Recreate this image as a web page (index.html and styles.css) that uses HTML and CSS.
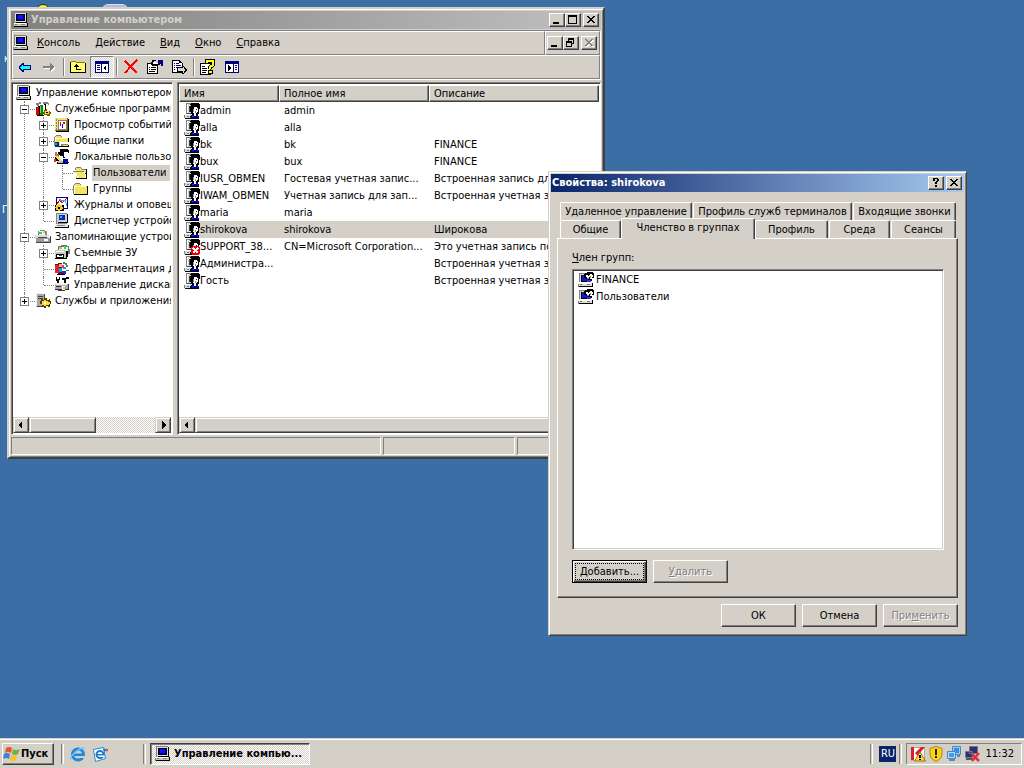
FILE: index.html
```html
<!DOCTYPE html>
<html lang="ru">
<head>
  <meta charset="UTF-8">
  <meta name="viewport" content="width=device-width, initial-scale=1.0">
  <title>Управление компьютером</title>
  <link rel="stylesheet" href="styles.css">
</head>
<body>
  <svg class="sprite" aria-hidden="true">
    <symbol id="pc" viewBox="0 0 16 16">
      <path fill="#808080" d="M1 0h12v1H2v10H1z"/>
      <path fill="#e4e0d8" d="M2 1h11v9H2z"/>
      <path fill="#000" d="M3 2h9v7H3zM13 1h1v10H3v-1h10z"/>
      <path fill="#0000a8" d="M4 3h7v5H4z"/>
      <path fill="#1010ff" d="M5 3h5v4H5z"/>
      <path fill="#c8c4bc" d="M1 11h13v3H1z"/>
      <path fill="#fff" d="M1 11h12v1H1z"/>
      <path fill="#808080" d="M0 12h1v3H0zM8 12h4v1H8z"/>
      <path fill="#000" d="M14 11h1v4h-1zM1 14h14v1H1z"/>
      <path fill="#0c0" d="M2 12h2v1H2z"/>
    </symbol>
    <symbol id="user" viewBox="0 0 16 16">
      <path fill="#808080" d="M2 0h6v1H3v10H2z"/>
      <path fill="#d8d8d8" d="M3 1h4v10H3z"/>
      <path fill="#fff" d="M3 1h1v9H3z"/>
      <path fill="#404040" d="M5 3h2v6H5zM3 10h5v1H3z"/>
      <path fill="#d8d8d8" d="M1 11h6v4H1z"/>
      <path fill="#808080" d="M0 12h1v3H0z"/>
      <path fill="#fff" d="M1 11h5v1H1z"/>
      <path fill="#0c0" d="M3 13h2v1H3z"/>
      <path fill="#000" d="M7 0h8v1h1v5h-1v5h-1v1H8v-1H7V9H6V3h1V2H6V1h1zM1 15h14v1H1z"/>
      <path fill="#fff" d="M10 4h3v1h1v4h-1v1h-1v2h-2v-2H9V8h1z"/>
      <path fill="#909090" d="M9 6h1v3H9zM11 8h1v2h-1z"/>
      <path fill="#0000c0" d="M12 6h1v1h-1z"/>
      <path fill="#000080" d="M7 12h3v1h2v-1h2v1h1v2H6v-2h1z"/>
      <path fill="#22f" d="M8 13h2v1H8zM13 13h1v1h-1z"/>
    </symbol>
    <symbol id="user-off" viewBox="0 0 16 16">
      <use href="#user"/>
      <path fill="#e00" d="M8 7h7v1h1v7h-1v1H8v-1H7V8h1z"/>
      <path stroke="#fff" stroke-width="2" d="M9 9l5 5M14 9l-5 5"/>
    </symbol>
    <symbol id="group" viewBox="0 0 16 16">
      <path fill="#808080" d="M1 1h7v1H2v8H1z"/>
      <path fill="#d8d8d8" d="M2 2h7v8H2z"/>
      <path fill="#000" d="M3 3h10v7H3z"/>
      <path fill="#1515d0" d="M4 3h6v6H4z"/>
      <path fill="#000" d="M7 1h2V0h6v1h1v5h-2v3h-4V7H8V6H6V2h1z"/>
      <path fill="#fff" d="M8 3h2v1h1v2H9V5H8zM12 2h2v1h1v2h-1v2h-2V5h-1V3h1z"/>
      <path fill="#808080" d="M9 6h2v1H9zM12 4h1v2h-1z"/>
      <path fill="#2a2aff" d="M9 8h4v2H9z"/>
      <path fill="#dcdcdc" d="M1 11h13v3H1z"/>
      <path fill="#fff" d="M1 11h12v1H1z"/>
      <path fill="#0a0" d="M2 12h2v1H2z"/>
      <path fill="#808080" d="M9 12h3v1H9zM0 12h1v3H0z"/>
      <path fill="#000" d="M14 11h1v4h-1zM1 14h14v1H1z"/>
    </symbol>
    <symbol id="folder" viewBox="0 0 16 16">
      <path fill="#808080" d="M1 3h1V2h5v1h1v1h6v1H1zM0 4h1v9H0z"/>
      <path fill="#fff" d="M1 4h13v9H1z"/>
      <path fill="#f2e45c" d="M2 3h5v1h1v1h6v8H2z"/>
      <path fill="#fff7b0" d="M2 5h11v1H2z"/>
      <path fill="#000" d="M14 5h1v9H1v-1h13z"/>
    </symbol>
    <symbol id="folder-open" viewBox="0 0 16 16">
      <path fill="#808080" d="M2 3h1V2h5v1h1v1h4v1H2z"/>
      <path fill="#f2e45c" d="M3 3h5v1h1v1h4v8H3z"/>
      <path fill="#000" d="M13 4h1v9h-1zM3 13h11v1H3zM12 8h1v2h-1z"/>
      <path fill="#fff" d="M0 6h11v1h1v2h1v4H4v-2H3V9H2V8H1V7H0z"/>
      <path fill="#f4e66c" d="M2 7h9v2h1v4H5v-2H4V9H3V8H2z"/>
      <path fill="#808080" d="M0 6h11v1H0z"/>
    </symbol>
    <symbol id="tools" viewBox="0 0 16 16">
      <path fill="#808080" d="M1 2h3V1h2v2H4v2H2V4H1zM8 1h5v1h1v2h-1V3H8z"/>
      <path fill="#000" d="M3 5h2v9H3zM9 3h2v9H9z"/>
      <path fill="#d00" d="M1 6h3v8H1z"/>
      <path fill="#080" d="M5 4h3v10H5z"/>
      <path fill="#6d6" d="M5 5h1v7H5z"/>
      <path fill="#fff" d="M9 4h1v5H9z"/>
      <path fill="#806000" d="M9 9h2V8h1v2h3v1h1v2h-1v2h-3v-1H9v-1H8v-2h1z"/>
      <path fill="#fd3" d="M10 10h4v3h-4z"/>
      <path fill="#000" d="M11 11h2v1h-2zM2 14h7v1H2z"/>
    </symbol>
    <symbol id="events" viewBox="0 0 16 16">
      <path fill="#806000" d="M1 1h13v13H1z"/>
      <path fill="#f2e070" d="M1 1h12v12H1z"/>
      <path fill="#000" d="M14 2h1v13H2v-1h12z"/>
      <path fill="#808080" d="M4 3h9v10H4z"/>
      <path fill="#fff" d="M5 4h7v8H5z"/>
      <path fill="#808080" d="M2 2h1v2H2zM2 5h1v2H2zM2 8h1v2H2zM2 11h1v2H2z"/>
      <path fill="#e00" d="M6 5h1v4H6zM9 5h2v2H9z"/>
      <path fill="#00c" d="M8 7h1v4H8z"/>
    </symbol>
    <symbol id="shared" viewBox="0 0 16 16">
      <use href="#folder"/>
      <path fill="#fff" d="M6 9h9v3H9v1H6z"/>
      <path fill="#808080" d="M7 11h7v1H9v1H7z"/>
      <path fill="#003080" d="M1 9h4v5H1z"/>
      <path fill="#29f" d="M1 10h2v2H1z"/>
      <path fill="#000" d="M5 13h9v1H5z"/>
    </symbol>
    <symbol id="users" viewBox="0 0 16 16">
      <path fill="#000" d="M6 0h8v1h1v3h-3v5H9V7H6V6H4V3h2z"/>
      <path fill="#fff" d="M10 3h4v2h1v3h-1v2h-3V8h-1z"/>
      <path fill="#c66" d="M1 3h2v2h2v3H3V7H1z"/>
      <path fill="#000" d="M1 8h4v4H1zM3 13h11v2H3z"/>
      <path fill="#ee3" d="M2 7h2v1h1v1h1v1h1v1h1v2H6v-1H5v-1H4v-1H3V9H2z"/>
      <path fill="#00a" d="M9 10h5v3h1v1H9z"/>
      <path fill="#e22" d="M0 10h2v3H0z"/>
      <path fill="#bbb" d="M4 12h5v2H4z"/>
    </symbol>
    <symbol id="perf" viewBox="0 0 16 16">
      <path fill="#00008b" d="M2 0h12v12H2z"/>
      <path fill="#fff" d="M3 1h10v10H3z"/>
      <path fill="none" stroke="#e00" d="M3 7l3-4 2 3 5-5"/>
      <path fill="none" stroke="#39f" d="M5 2l3 2 3-1 2 6"/>
      <path fill="#000" d="M1 8h9v6H1z"/>
      <path fill="#ec2" d="M2 8h2V7h2v1h2v2h1v2H8v1H6v1H4v-1H2v-2H1v-1h1z"/>
      <path fill="#000" d="M4 10h2v2H4z"/>
    </symbol>
    <symbol id="device" viewBox="0 0 16 16">
      <path fill="#808080" d="M2 0h11v1H3v9H2z"/>
      <path fill="#d0d0d0" d="M3 1h10v8H3z"/>
      <path fill="#000" d="M13 1h1v9H4V9h9zM1 14h14v1H1zM14 12h1v2h-1z"/>
      <path fill="#0030c0" d="M5 2h6v5H5z"/>
      <path fill="#3bf" d="M6 3h2v2H6z"/>
      <path fill="#e4e4e4" d="M2 11h11v1h1v2H1v-2h1z"/>
      <path fill="#888" d="M3 12h8v1H3zM2 10h11v1H2z"/>
    </symbol>
    <symbol id="storage" viewBox="0 0 16 16">
      <path fill="#888" d="M3 2h2V1h5v1h2v5H3z"/>
      <path fill="#dff" d="M4 2h6v4H4z"/>
      <path fill="#3d3" d="M4 3h3v2H4z"/>
      <path fill="#fb4" d="M8 2h2v2H8z"/>
      <path fill="#ddd" d="M0 6h14v3H0z"/>
      <path fill="#999" d="M1 9h14v4H1z"/>
      <path fill="#444" d="M3 8h9v1H3zM1 13h14v1H1zM15 7h1v7h-1z"/>
      <path fill="#fff" d="M9 10h4v2H9z"/>
    </symbol>
    <symbol id="removable" viewBox="0 0 16 16">
      <path fill="#777" d="M4 1h3V0h6v1h2v3h1v5h-4V6H4z"/>
      <path fill="#dff" d="M5 2h9v4H5z"/>
      <path fill="#3d3" d="M10 1h2v3h-2z"/>
      <path fill="#fa3" d="M5 2h3v2H5z"/>
      <path fill="#c8c8c8" d="M1 5h11v8H1z"/>
      <path fill="#000" d="M2 9h8v4H2zM12 6h2v6h-1v2H1v-1h11z"/>
      <path fill="#fff" d="M3 10h6v2H3zM2 6h8v1H2z"/>
      <path fill="#444" d="M5 10h3v1H5z"/>
    </symbol>
    <symbol id="defrag" viewBox="0 0 16 16">
      <path fill="#800020" d="M1 3h3V2h4v10h3v1H4v-1H1z"/>
      <path fill="#e1203a" d="M1 4h4v8H1z"/>
      <path fill="#fb3" d="M5 3h3v3H5z"/>
      <path fill="#0ad" d="M5 7h3v4H5zM9 6h3v2H9z"/>
      <path fill="#1a1" d="M9 1h2v1h2v2h-2V3H9zM12 9h3v1h-3z"/>
      <path fill="#c3c" d="M8 4h2v3H8zM12 4h2v2h-2z"/>
      <path fill="#22c" d="M8 10h4v3H8z"/>
      <path fill="#000" d="M3 13h8v1H3z"/>
    </symbol>
    <symbol id="disk" viewBox="0 0 16 16">
      <path fill="#000" d="M2 0h1v2h2V0h1v3H5v4H3V4H2zM8 1h4V0h3v2h-3v5h-2V3H8z"/>
      <path fill="#aaa" d="M1 7h13v5H1z"/>
      <path fill="#eee" d="M2 6h11v2H2z"/>
      <path fill="#333" d="M2 9h5v1H2zM14 7h1v6h-1zM1 12h13v1H1zM4 13h7v1H4z"/>
      <path fill="#fff" d="M8 9h3v4H8z"/>
      <path fill="#cc2" d="M9 10h2v2H9z"/>
    </symbol>
    <symbol id="services" viewBox="0 0 16 16">
      <path fill="#aaa" d="M1 1h8v13H1z"/>
      <path fill="#eee" d="M1 0h7v1H2v12H1z"/>
      <path fill="#444" d="M3 3h5v1H3zM3 5h5v1H3zM9 1h1v13H2v-1h7z"/>
      <path fill="#504000" d="M6 6h2v1h1V5h3v2h2V6h1v2h1v3h-1v3h-2v-1h-2v2H9v-2H7v-2H5V8h1z"/>
      <path fill="#fd3" d="M7 8h2V7h2v1h2v1h2v2h-1v1h-3v1H9v-1H7z"/>
      <path fill="#fff" d="M9 9h2v2H9z"/>
    </symbol>
    <symbol id="back" viewBox="0 0 16 16">
      <path fill="#000080" d="M2 7h1V6h1V5h1V4h2v2h7v5H7v2H5v-1H4v-1H3v-1H2z"/>
      <path fill="#0ff" d="M3 8h1V7h1V6h1v1h7v3H6v1H5v-1H4V9H3z"/>
    </symbol>
    <symbol id="forward" viewBox="0 0 16 16">
      <path fill="#fff" d="M3 8h7V5l5 4-5 4v-3H3z"/>
      <path fill="#808080" d="M2 7h7V4l5 4-5 4V9H2z"/>
    </symbol>
    <symbol id="up" viewBox="0 0 16 16">
      <path fill="#ffff70" d="M1 2h5v2h9v9H1z"/>
      <path fill="#000" d="M0 3h1v10h14V4h1v10H0zM6 5h1v1h1v1h1v1H7v2h4v1H6V8H4V7h1V6h1z"/>
      <path fill="#808000" d="M1 2h5v1H1zM6 3h9v1H6z"/>
    </symbol>
    <symbol id="tree-pane" viewBox="0 0 16 16">
      <path fill="#000080" d="M1 2h14v12H1z"/>
      <path fill="#fff" d="M2 5h5v8H2zM8 5h6v8H8z"/>
      <path fill="#000080" d="M3 6h3v1H3zM3 8h3v1H3zM3 10h3v1H3z"/>
      <path fill="#000" d="M12 6v6L9 9z"/>
    </symbol>
    <symbol id="action-pane" viewBox="0 0 16 16">
      <path fill="#000080" d="M1 2h14v12H1z"/>
      <path fill="#fff" d="M2 5h7v8H2zM10 5h4v8h-4z"/>
      <path fill="#000080" d="M11 6h2v1h-2zM11 8h2v1h-2zM11 10h2v1h-2z"/>
      <path fill="#000" d="M4 6v6l3-3z"/>
    </symbol>
    <symbol id="delete" viewBox="0 0 16 16">
      <path fill="none" stroke="#f00" stroke-width="2" d="M2 2l12 12M14 1L8 7l-6 7"/>
    </symbol>
    <symbol id="props" viewBox="0 0 16 16">
      <path fill="#000" d="M0 4h11v11H0z"/>
      <path fill="#fff" d="M1 5h9v9H1z"/>
      <path fill="#000" d="M2 8h1v1H2zM4 8h5v1H4zM2 10h1v1H2zM4 10h5v1H4zM2 12h6v1H2zM5 1h4v1H7v2h4V3h2v3h-3v1H5V6H4V3h1z"/>
      <path fill="#fff" d="M6 3h3v1h2v1H6z"/>
      <path fill="#000080" d="M11 1h5v6h-2V5h-3z"/>
    </symbol>
    <symbol id="export" viewBox="0 0 16 16">
      <path fill="#000" d="M1 1h8v1h1v1h1v1h1v10H1z"/>
      <path fill="#fff" d="M2 2h6v2h3v9H2z"/>
      <path fill="#000080" d="M3 4h1v1H3zM5 4h3v1H5zM3 6h1v1H3zM5 6h5v1H5zM3 8h1v1H3zM5 8h2v1H5zM3 10h1v1H3z"/>
      <path fill="#000" d="M6 8h5V7h2v1h1v1h1v1h1v2h-1v1h-1v1h-1v1h-2v-2H6z"/>
      <path fill="#d8d8d8" d="M7 9h5V8h1v2h1v2h-1v2h-1v-2H7z"/>
    </symbol>
    <symbol id="help" viewBox="0 0 16 16">
      <path fill="#000" d="M0 4h11v12H0z"/>
      <path fill="#fff" d="M1 5h9v10H1z"/>
      <path fill="#000" d="M2 7h3v1H2zM2 9h5v1H2zM2 11h5v1H2zM2 13h4v1H2z"/>
      <path fill="none" stroke="#000" stroke-width="4" d="M7 5V2h6v4l-3 2v2"/>
      <path fill="none" stroke="#ff0" stroke-width="2" d="M7 4V2h6v4l-3 2v2"/>
      <path fill="#000" d="M8 11h5v4H8z"/>
      <path fill="#ff0" d="M9 12h3v2H9z"/>
    </symbol>
    <symbol id="flag" viewBox="0 0 18 16">
      <path fill="#e8532b" d="M3 2q3-2 6 0L8 7Q5 5 2 7z"/>
      <path fill="#6cb33f" d="M10 3q3 2 7 0l-2 5q-3 2-6 0z"/>
      <path fill="#3f7de0" d="M1 8q3-2 6 0l-1 5q-3-2-6 0z"/>
      <path fill="#f8c21c" d="M8 9q3 2 6 0l-1 5q-3 2-6 0z"/>
    </symbol>
    <symbol id="ie" viewBox="0 0 16 16">
      <circle cx="8" cy="8.500" r="5.500" fill="none" stroke="#1c8adb" stroke-width="3"/>
      <path fill="#1c8adb" d="M4 7.500h10v2.500H4z"/>
      <path fill="#d4d0c8" d="M9 10h7v2H9z"/>
      <path fill="none" stroke="#7cc4f4" stroke-width="1.500" d="M1 14C-1 11 9 1 15 2"/>
    </symbol>
    <symbol id="outlook" viewBox="0 0 16 16">
      <path fill="#fff" stroke="#2a86d4" d="M1.500 3.500l10-2 2 11-10 3z"/>
      <circle cx="8" cy="8.500" r="3.500" fill="none" stroke="#1c7acb" stroke-width="2"/>
      <path fill="#1c7acb" d="M5 8h6v1.500H5z"/>
      <path fill="#fff" d="M9 9.500h3V11H9z"/>
      <path fill="#2a76c4" d="M11 4l2-2v1h3v2h-3v1z"/>
      <path fill="#e8662a" d="M14 2l2 2-2 2z"/>
    </symbol>
    <symbol id="kav" viewBox="0 0 16 16">
      <path fill="#fff" stroke="#aaa" d="M1.500 1.500h13v13h-13z"/>
      <path fill="#d8202a" d="M1 1h3v13H1zM5 7l6-6h4L9 8l6 6h-4z"/>
      <path fill="#ffd84a" stroke="#a07000" d="M10 6l5.500 9h-11z"/>
      <path fill="#000" d="M9 9h2v3H9zM9 13h2v1H9z"/>
    </symbol>
    <symbol id="shield" viewBox="0 0 16 16">
      <path fill="#fcd116" stroke="#a88410" d="M8 .5l6 2V8q0 5-6 7.500Q2 13 2 8V2.500z"/>
      <path fill="#222" d="M7 3h2v6H7zM7 10h2v2H7z"/>
    </symbol>
    <symbol id="net" viewBox="0 0 16 16">
      <path fill="#9cc8f0" stroke="#4a88c8" d="M6.500 .5h8v8h-8z"/>
      <path fill="#2f8ee8" d="M8 2h5v5H8z"/>
      <path fill="#b4d8f8" stroke="#4a88c8" d="M1.500 5.500h8v7h-8z"/>
      <path fill="#3aa0f4" d="M3 7h5v4H3z"/>
      <path fill="#7088a0" d="M3 13h6v2H3zM11 9h3v2h-3z"/>
    </symbol>
    <symbol id="net-off" viewBox="0 0 16 16">
      <path fill="#26336e" stroke="#778" d="M5.500 .5h8v7h-8zM1.500 5.500h7v6h-7z"/>
      <path fill="#556" d="M2 12h7v2H2z"/>
      <path stroke="#e0303a" stroke-width="2.500" d="M8 8l7 7M15 7l-7 8"/>
    </symbol>
    <symbol id="min" viewBox="0 0 12 10"><path d="M2 7h6v2H2z"/></symbol>
    <symbol id="max" viewBox="0 0 12 10"><path d="M1 0h9v9H1zM2 2v6h7V2z" fill-rule="evenodd"/></symbol>
    <symbol id="restore" viewBox="0 0 12 10"><path d="M3 0h6v6H7V5h1V2H4v1H3zM1 3h6v6H1zM2 5v3h4V5z" fill-rule="evenodd"/></symbol>
    <symbol id="close" viewBox="0 0 12 10"><path d="M2 1h2v1h1v1h2V2h1V1h2v1H9v1H8v1H7v1h1v1h1v1h1v1H8V7H7V6H5v1H4v1H2V7h1V6h1V5h1V4H4V3H3V2H2z"/></symbol>
    <symbol id="ask" viewBox="0 0 12 10"><path d="M3 0h5v1h1v2H8v1H7v2H5V4h1V3h1V1H5v2H3V1H2zM5 7h2v2H5z"/></symbol>
    <symbol id="left" viewBox="0 0 12 10"><path d="M3 5l4-4v8z"/></symbol>
    <symbol id="right" viewBox="0 0 12 10"><path d="M9 5L5 1v8z"/></symbol>
  </svg>

  <main class="desktop">
    <div class="shortcut shortcut-top"></div>
    <div class="shortcut shortcut-bin"></div>
    <span class="shortcut-label first">к</span>
    <span class="shortcut-label second">П</span>

    <section class="window mmc">
      <header class="titlebar inactive">
        <svg class="icon"><use href="#pc"/></svg>
        <h1>Управление компьютером</h1>
        <button class="caption" aria-label="Свернуть"><svg><use href="#min"/></svg></button>
        <button class="caption" aria-label="Развернуть"><svg><use href="#max"/></svg></button>
        <button class="caption close" aria-label="Закрыть"><svg><use href="#close"/></svg></button>
      </header>

      <div class="bars">
        <div class="menu-row">
          <nav class="menu">
            <svg class="icon"><use href="#pc"/></svg>
            <button><u>К</u>онсоль</button>
            <button><u>Д</u>ействие</button>
            <button><u>В</u>ид</button>
            <button><u>О</u>кно</button>
            <button><u>С</u>правка</button>
          </nav>
          <div class="child-buttons">
            <button class="caption" aria-label="Свернуть"><svg><use href="#min"/></svg></button>
            <button class="caption" aria-label="Восстановить"><svg><use href="#restore"/></svg></button>
            <button class="caption close" aria-label="Закрыть" disabled><svg><use href="#close"/></svg></button>
          </div>
        </div>
        <div class="toolbar">
          <button aria-label="Назад"><svg class="icon"><use href="#back"/></svg></button>
          <button aria-label="Вперед"><svg class="icon"><use href="#forward"/></svg></button>
          <span class="sep"></span>
          <button aria-label="Вверх"><svg class="icon"><use href="#up"/></svg></button>
          <button class="pressed" aria-label="Дерево консоли"><svg class="icon"><use href="#tree-pane"/></svg></button>
          <span class="sep"></span>
          <button aria-label="Удалить"><svg class="icon"><use href="#delete"/></svg></button>
          <button aria-label="Свойства"><svg class="icon"><use href="#props"/></svg></button>
          <button aria-label="Экспорт"><svg class="icon"><use href="#export"/></svg></button>
          <span class="sep"></span>
          <button aria-label="Справка"><svg class="icon"><use href="#help"/></svg></button>
          <button aria-label="Панель действий"><svg class="icon"><use href="#action-pane"/></svg></button>
        </div>
      </div>

      <div class="panes">
        <div class="pane tree-pane">
          <div class="tree">
            <div class="node"><svg class="icon"><use href="#pc"/></svg><span>Управление компьютером</span></div>
            <ul>
              <li>
                <div class="node"><button class="toggle open" aria-label="Свернуть"></button><svg class="icon"><use href="#tools"/></svg><span>Служебные программы</span></div>
                <ul>
                  <li><div class="node"><button class="toggle" aria-label="Развернуть"></button><svg class="icon"><use href="#events"/></svg><span>Просмотр событий</span></div></li>
                  <li><div class="node"><button class="toggle" aria-label="Развернуть"></button><svg class="icon"><use href="#shared"/></svg><span>Общие папки</span></div></li>
                  <li>
                    <div class="node"><button class="toggle open" aria-label="Свернуть"></button><svg class="icon"><use href="#users"/></svg><span>Локальные пользователи</span></div>
                    <ul>
                      <li><div class="node leaf"><svg class="icon"><use href="#folder-open"/></svg><span class="current">Пользователи</span></div></li>
                      <li><div class="node leaf"><svg class="icon"><use href="#folder"/></svg><span>Группы</span></div></li>
                    </ul>
                  </li>
                  <li><div class="node"><button class="toggle" aria-label="Развернуть"></button><svg class="icon"><use href="#perf"/></svg><span>Журналы и оповещения</span></div></li>
                  <li><div class="node leaf"><svg class="icon"><use href="#device"/></svg><span>Диспетчер устройств</span></div></li>
                </ul>
              </li>
              <li>
                <div class="node"><button class="toggle open" aria-label="Свернуть"></button><svg class="icon"><use href="#storage"/></svg><span>Запоминающие устройства</span></div>
                <ul>
                  <li><div class="node"><button class="toggle" aria-label="Развернуть"></button><svg class="icon"><use href="#removable"/></svg><span>Съемные ЗУ</span></div></li>
                  <li><div class="node leaf"><svg class="icon"><use href="#defrag"/></svg><span>Дефрагментация диска</span></div></li>
                  <li><div class="node leaf"><svg class="icon"><use href="#disk"/></svg><span>Управление дисками</span></div></li>
                </ul>
              </li>
              <li><div class="node"><button class="toggle" aria-label="Развернуть"></button><svg class="icon"><use href="#services"/></svg><span>Службы и приложения</span></div></li>
            </ul>
          </div>
          <div class="scrollbar">
            <button aria-label="Влево"><svg><use href="#left"/></svg></button>
            <div class="thumb"></div>
            <button class="end" aria-label="Вправо"><svg><use href="#right"/></svg></button>
          </div>
        </div>

        <div class="pane list-pane">
          <table>
            <thead>
              <tr><th class="col-name">Имя</th><th class="col-full">Полное имя</th><th>Описание</th></tr>
            </thead>
            <tbody>
              <tr><td><svg class="icon"><use href="#user"/></svg>admin</td><td>admin</td><td></td></tr>
              <tr><td><svg class="icon"><use href="#user"/></svg>alla</td><td>alla</td><td></td></tr>
              <tr><td><svg class="icon"><use href="#user"/></svg>bk</td><td>bk</td><td>FINANCE</td></tr>
              <tr><td><svg class="icon"><use href="#user"/></svg>bux</td><td>bux</td><td>FINANCE</td></tr>
              <tr><td><svg class="icon"><use href="#user"/></svg>IUSR_OBMEN</td><td>Гостевая учетная запис...</td><td>Встроенная запись для</td></tr>
              <tr><td><svg class="icon"><use href="#user"/></svg>IWAM_OBMEN</td><td>Учетная запись для зап...</td><td>Встроенная учетная запись</td></tr>
              <tr><td><svg class="icon"><use href="#user"/></svg>maria</td><td>maria</td><td></td></tr>
              <tr class="selected"><td><svg class="icon"><use href="#user"/></svg>shirokova</td><td>shirokova</td><td>Широкова</td></tr>
              <tr><td><svg class="icon"><use href="#user-off"/></svg>SUPPORT_38...</td><td>CN=Microsoft Corporation...</td><td>Это учетная запись по</td></tr>
              <tr><td><svg class="icon"><use href="#user"/></svg>Администра...</td><td></td><td>Встроенная учетная запись</td></tr>
              <tr><td><svg class="icon"><use href="#user"/></svg>Гость</td><td></td><td>Встроенная учетная запись</td></tr>
            </tbody>
          </table>
          <div class="scrollbar">
            <button aria-label="Влево"><svg><use href="#left"/></svg></button>
            <div class="thumb wide"></div>
            <button class="end" aria-label="Вправо"><svg><use href="#right"/></svg></button>
          </div>
        </div>
      </div>

      <footer class="statusbar"><span></span><span></span><span></span></footer>
    </section>

    <section class="window dialog">
      <header class="titlebar">
        <h2>Свойства: shirokova</h2>
        <button class="caption" aria-label="Справка"><svg><use href="#ask"/></svg></button>
        <button class="caption close" aria-label="Закрыть"><svg><use href="#close"/></svg></button>
      </header>

      <div class="tabs">
        <div class="tab-row">
          <button class="tab-wide">Удаленное управление</button>
          <button class="tab-widest">Профиль служб терминалов</button>
          <button class="tab-fill">Входящие звонки</button>
        </div>
        <div class="tab-row">
          <button class="tab-narrow">Общие</button>
          <button class="tab-wide active">Членство в группах</button>
          <button class="tab-medium">Профиль</button>
          <button class="tab-narrow">Среда</button>
          <button class="tab-fill">Сеансы</button>
        </div>
        <div class="tab-page">
          <p id="membersLabel"><u>Ч</u>лен групп:</p>
          <ul class="members" aria-labelledby="membersLabel">
            <li><svg class="icon"><use href="#group"/></svg>FINANCE</li>
            <li><svg class="icon"><use href="#group"/></svg>Пользователи</li>
          </ul>
          <div class="buttons">
            <button class="push default"><span><u>Д</u>обавить...</span></button>
            <button class="push" disabled><u>У</u>далить</button>
          </div>
        </div>
      </div>

      <div class="buttons dialog-buttons">
        <button class="push">ОК</button>
        <button class="push">Отмена</button>
        <button class="push" disabled>При<u>м</u>енить</button>
      </div>
    </section>
  </main>

  <footer class="taskbar">
    <button class="start"><svg><use href="#flag"/></svg>Пуск</button>
    <span class="grip"></span>
    <div class="quick">
      <button aria-label="Internet Explorer"><svg class="icon"><use href="#ie"/></svg></button>
      <button aria-label="Outlook Express"><svg class="icon"><use href="#outlook"/></svg></button>
    </div>
    <span class="grip task-grip"></span>
    <button class="task"><svg class="icon"><use href="#pc"/></svg>Управление компью...</button>
    <span class="grip lang-grip"></span>
    <button class="lang">RU</button>
    <span class="grip"></span>
    <div class="tray">
      <svg class="icon"><use href="#kav"/></svg>
      <svg class="icon"><use href="#shield"/></svg>
      <svg class="icon"><use href="#net"/></svg>
      <svg class="icon"><use href="#net-off"/></svg>
      <time>11:32</time>
    </div>
  </footer>
</body>
</html>
```
FILE: styles.css
```css
* { box-sizing: border-box; }
body {
  margin: 0;
  height: 100vh;
  display: flex;
  flex-direction: column;
  overflow: hidden;
  background: #3a6ea5;
  color: #000;
  font: 11px/16px Tahoma, "DejaVu Sans Condensed", "DejaVu Sans", sans-serif;
}
button {
  font: inherit;
  color: inherit;
  padding: 0;
  border: 0;
  background: #d4d0c8;
}
h1, h2, p, ul {
  margin: 0;
  padding: 0;
}
ul { list-style: none; }
svg { display: block; flex: none; }
.sprite { position: absolute; width: 0; height: 0; }
.icon {
  width: 16px;
  height: 16px;
  shape-rendering: crispEdges;
}

/* desktop */
.desktop {
  flex: 1;
  position: relative;
  overflow: hidden;
}
.shortcut { position: absolute; }
.shortcut-top {
  left: 36px;
  top: 4px;
  width: 14px;
  height: 14px;
  border: 1px solid #222;
  border-radius: 50%;
  background: #ff0;
}
.shortcut-bin {
  left: 102px;
  top: 4px;
  width: 26px;
  height: 10px;
  background: #b4b8e0;
  border-top: 1px solid #dde;
  border-radius: 6px 6px 0 0;
}
.shortcut-label {
  position: absolute;
  color: #fff;
}
.first { left: 4px; top: 51px; }
.second { left: 2px; top: 202px; }

/* windows */
.window {
  position: absolute;
  background: #d4d0c8;
  padding: 2px;
  border: 2px solid;
  border-color: #d4d0c8 #404040 #404040 #d4d0c8;
  box-shadow: inset 1px 1px #fff, inset -1px -1px #808080;
}
.mmc {
  left: 7px;
  top: 7px;
  width: 598px;
}
.dialog {
  left: 548px;
  top: 171px;
  width: 419px;
  border-width: 1px;
}
.titlebar {
  height: 18px;
  display: flex;
  align-items: center;
  padding: 0 2px;
  background: linear-gradient(to right, #0a246a, #a6caf0);
  color: #fff;
}
.titlebar.inactive {
  background: linear-gradient(to right, #808080, #c0c0c0);
  color: #d4d0c8;
}
.titlebar h1, .titlebar h2 {
  flex: 1;
  font-size: 11px;
  line-height: 16px;
  white-space: nowrap;
}
.titlebar h1 { padding-left: 2px; }
.caption {
  width: 16px;
  height: 14px;
  padding: 1px 2px 3px;
  border: 1px solid;
  border-color: #fff #404040 #404040 #fff;
  box-shadow: inset -1px -1px #808080;
}
.caption svg, .scrollbar svg {
  width: 12px;
  height: 10px;
  shape-rendering: crispEdges;
}
.caption svg { margin-left: -1px; }
.caption.close { margin-left: 2px; }
.caption:disabled svg {
  fill: #808080;
  filter: drop-shadow(1px 1px #fff);
}

/* menu and toolbar */
.bars {
  margin-top: 1px;
  border: 1px solid;
  border-color: #808080 #fff #fff #808080;
}
.menu-row { display: flex; }
.menu, .toolbar, .child-buttons {
  height: 24px;
  display: flex;
  align-items: center;
  border: 1px solid;
  border-color: #fff #808080 #808080 #fff;
}
.menu { flex: 1; gap: 1px; }
.menu button { padding: 0 7px; }
.child-buttons { padding: 0 2px 0 1px; }
.toolbar button {
  width: 24px;
  height: 22px;
  padding: 3px 4px;
}
.toolbar .pressed, .task, .scrollbar {
  background: repeating-conic-gradient(#fff 0 25%, #d4d0c8 0 50%) 0 0 / 2px 2px;
}
.toolbar .pressed {
  border: 1px solid;
  border-color: #808080 #fff #fff #808080;
  padding: 2px 3px;
}
.sep {
  width: 2px;
  height: 18px;
  margin: 0 1px 0 2px;
  background: #808080;
  border-right: 1px solid #fff;
}

/* panes */
.panes {
  display: flex;
  gap: 4px;
  margin-top: 2px;
  height: 353px;
}
.pane {
  display: flex;
  flex-direction: column;
  overflow: hidden;
  background: #fff;
  border: 1px solid;
  border-color: #808080 #fff #fff #808080;
  box-shadow: inset 1px 1px #404040;
  padding: 2px 1px 1px;
}
.tree-pane { width: 162px; }
.list-pane { flex: 1; }
.tree, .list-pane table { flex: none; }
.tree {
  padding-left: 3px;
  overflow: hidden;
  white-space: nowrap;
}
.tree > ul { margin-left: 4px; }
.tree ul ul { margin-left: 19px; }
.tree li { position: relative; }
.tree li::before {
  content: "";
  position: absolute;
  left: 4px;
  top: 0;
  bottom: 0;
  border-left: 1px dotted #808080;
}
.tree li:last-child::before {
  bottom: auto;
  height: 8px;
}
.node {
  display: flex;
  align-items: center;
  height: 16px;
}
.node > *, .leaf::before { flex: none; }
.node span { margin-left: 3px; padding: 0 1px; }
.node .current {
  background: #d4d0c8;
  padding-right: 4px;
}
.toggle {
  position: relative;
  width: 9px;
  height: 9px;
  margin-right: 6px;
  border: 1px solid #808080;
  background:
    linear-gradient(#000, #000) center / 5px 1px no-repeat,
    linear-gradient(#000, #000) center / 1px 5px no-repeat,
    #fff;
}
.toggle.open {
  background: linear-gradient(#000, #000) center / 5px 1px no-repeat, #fff;
}
.toggle::after {
  content: "";
  position: absolute;
  left: 9px;
  top: 3px;
  width: 5px;
  border-top: 1px dotted #808080;
}
.leaf::before {
  content: "";
  width: 10px;
  margin-left: 5px;
  border-top: 1px dotted #808080;
}

.scrollbar {
  height: 16px;
  margin-top: auto;
  display: flex;
}
.scrollbar button, .thumb {
  border: 1px solid;
  border-color: #d4d0c8 #404040 #404040 #d4d0c8;
  box-shadow: inset 1px 1px #fff, inset -1px -1px #808080;
}
.scrollbar button {
  width: 16px;
  padding: 1px;
}
.thumb { width: 67px; background: #d4d0c8; }
.thumb.wide { width: 380px; }
.scrollbar .end { margin-left: auto; }

table {
  width: 100%;
  table-layout: fixed;
  border-collapse: separate;
  border-spacing: 0;
}
th, td {
  height: 17px;
  padding: 0 5px;
  overflow: hidden;
  white-space: nowrap;
  text-align: left;
  font-weight: normal;
}
th {
  padding: 0 4px;
  line-height: 15px;
  background: #d4d0c8;
  border: 1px solid;
  border-color: #fff #404040 #404040 #fff;
  box-shadow: inset -1px -1px #808080;
}
td:first-child { padding-right: 0; }
td .icon { float: left; }
.col-name { width: 100px; }
.col-full { width: 150px; }
.selected td { background: #d4d0c8; }
.selected td:first-child {
  background: linear-gradient(to right, #fff 20px, #d4d0c8 20px);
}

.statusbar {
  display: flex;
  gap: 2px;
  margin-top: 2px;
}
.statusbar span {
  height: 18px;
  border: 1px solid;
  border-color: #808080 #fff #fff #808080;
  width: 132px;
}
.statusbar span:first-child { width: 370px; }
.statusbar span:last-child { flex: 1; }

/* dialog */
.dialog .titlebar { padding-left: 1px; }
.tabs { margin: 10px 6px 0; }
.tab-row {
  display: flex;
  gap: 1px;
  height: 18px;
  padding: 0 2px 0 3px;
}
.tab-row button {
  white-space: nowrap;
  border: 1px solid;
  border-color: #fff #404040 transparent #fff;
  box-shadow: inset -1px 0 #808080;
  border-radius: 2px 2px 0 0;
  border-bottom: 0;
}
.tab-narrow { width: 61px; }
.tab-medium { width: 73px; }
.tab-wide { width: 132px; }
.tab-widest { width: 159px; }
.tab-fill { flex: 1; }
.tab-row .active {
  position: relative;
  width: 134px;
  height: 21px;
  margin: -2px -1px 0;
  padding-bottom: 2px;
  z-index: 1;
}
.tab-page {
  height: 360px;
  padding: 11px 13px 0 14px;
  border: 1px solid;
  border-color: #fff #404040 #404040 #fff;
  box-shadow: inset -1px -1px #808080;
}
.members {
  height: 281px;
  margin-top: 3px;
  padding: 2px 5px;
  background: #fff;
  border: 1px solid;
  border-color: #808080 #fff #fff #808080;
  box-shadow: inset 1px 1px #404040, inset -1px -1px #d4d0c8;
}
.members li {
  display: flex;
  gap: 2px;
  height: 17px;
}
.buttons {
  display: flex;
  gap: 6px;
  margin-top: 10px;
}
.dialog-buttons {
  justify-content: flex-end;
  margin: 6px;
}
.push {
  width: 75px;
  height: 23px;
  border: 1px solid;
  border-color: #fff #404040 #404040 #fff;
  box-shadow: inset -1px -1px #808080;
}
.push:disabled {
  color: #808080;
  text-shadow: 1px 1px #fff;
}
.default {
  border-color: #000;
  box-shadow: inset 1px 1px #fff, inset -1px -1px #404040, inset -2px -2px #808080;
  padding: 2px;
}
.default span {
  display: block;
  border: 1px dotted #000;
  line-height: 15px;
}

/* taskbar */
.taskbar {
  height: 30px;
  display: flex;
  align-items: center;
  padding: 2px 2px 0;
  background: #d4d0c8;
  box-shadow: inset 0 1px #d4d0c8, inset 0 2px #fff;
}
.taskbar button {
  height: 22px;
  white-space: nowrap;
}
.start, .task {
  display: flex;
  align-items: center;
  border: 1px solid;
  font-weight: bold;
}
.taskbar .start {
  width: 52px;
  border-color: #fff #404040 #404040 #fff;
  box-shadow: inset -1px -1px #808080;
}
.start svg { width: 18px; height: 16px; }
.taskbar .grip {
  width: 3px;
  height: 20px;
  margin: 0 6px 0 7px;
  border-left: 1px solid #808080;
  border-right: 1px solid #fff;
}
.quick {
  display: flex;
  gap: 6px;
  width: 66px;
}
.quick button { height: 16px; }
.quick .icon, .tray .icon { shape-rendering: auto; }
.taskbar .task-grip { margin-right: 4px; }
.taskbar .task {
  width: 160px;
  gap: 3px;
  padding-left: 4px;
  border-color: #404040 #fff #fff #404040;
  box-shadow: inset 1px 1px #808080;
}
.taskbar .lang-grip { margin-left: auto; }
.taskbar .lang {
  width: 17px;
  height: 16px;
  background: #0a246a;
  color: #fff;
}
.taskbar .lang + .grip { margin: 0 4px 0 3px; }
.tray {
  display: flex;
  align-items: center;
  gap: 2px;
  height: 22px;
  padding: 0 7px 0 3px;
  border: 1px solid;
  border-color: #808080 #fff #fff #808080;
}
.tray time { margin-left: 3px; }
```
